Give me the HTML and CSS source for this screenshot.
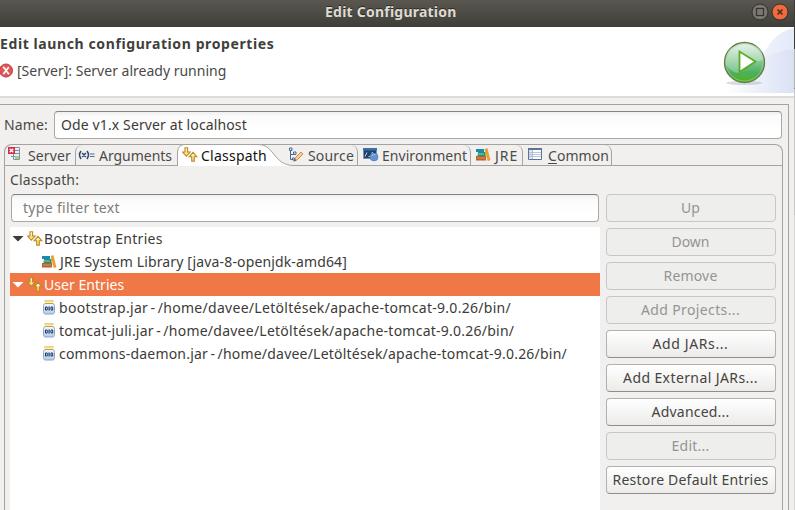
FILE: index.html
```html
<!DOCTYPE html>
<html lang="en">
<head>
<meta charset="utf-8">
<title>Edit Configuration</title>
<link rel="stylesheet" href="styles.css">
</head>
<body>
<svg class="defs" width="0" height="0">
  <defs>
    <linearGradient id="gold" x1="0" y1="0" x2="0" y2="1"><stop offset="0" stop-color="#fffbe0"/><stop offset="1" stop-color="#f8cf68"/></linearGradient>
    <linearGradient id="wave" x1="0" y1="0" x2="1" y2="0"><stop offset="0" stop-color="#fff"/><stop offset="1" stop-color="#e3e9f8"/></linearGradient>
    <linearGradient id="wave2" x1="0" y1="0" x2="1" y2="0"><stop offset="0" stop-color="#fff"/><stop offset="1" stop-color="#d7dff4"/></linearGradient>
    <linearGradient id="ball" x1="0" y1="0" x2="0" y2="1"><stop offset="0" stop-color="#e4f3e6"/><stop offset=".45" stop-color="#8ac998"/><stop offset=".75" stop-color="#4fae62"/><stop offset="1" stop-color="#4cb414"/></linearGradient>
    <linearGradient id="jarfill" x1="0" y1="0" x2="0" y2="1"><stop offset="0" stop-color="#f4f8fd"/><stop offset="1" stop-color="#b5cbe6"/></linearGradient>
    <symbol id="arrows" viewBox="0 0 16 16">
      <path d="M3 .700h2.600v4.300h2.600L4.300 9.300.500 5H3z" fill="url(#gold)" stroke="#bd8a1c" stroke-width="1.100"/>
      <path d="M9.700 14.300h2.600V9.800h2.600L11 5.400 7.200 9.800h2.500z" fill="url(#gold)" stroke="#bd8a1c" stroke-width="1.100"/>
    </symbol>
    <symbol id="books" viewBox="0 0 16 16">
      <path d="M1 2h8v3H1z" fill="#1e86b8"/><path d="M3 5h7.500v4H2.500z" fill="#19986b"/><path d="M3 6.500h6v1H3z" fill="#8fd5b5"/>
      <path d="M1 9h10v4.500H1z" fill="#b8602f"/><path d="M2 10.500h8v1H2z" fill="#de9b65"/>
      <path d="M10 2.300l2.200-.800L15 13l-2.200.500z" fill="#f4a126" stroke="#d9821a" stroke-width=".5"/>
    </symbol>
    <symbol id="jar" viewBox="0 0 16 16">
      <path d="M4 3.500C2.500 4.500 2.500 5 2.500 6.500V11.500c0 2 .8 2.500 2 2.500h7c1.200 0 2-.5 2-2.500V6.500c0-1.500 0-2-1.500-3z" fill="url(#jarfill)" stroke="#8ba4c6"/>
      <path d="M3.300 1h9.400M4 3.300h8" stroke="#d0a126" stroke-width="1.200"/><path d="M4 2.200h8" stroke="#fff1b0"/>
      <path d="M4.500 7h1.700v3H4.500zM10 7h1.700v3H10z" fill="#fff" stroke="#17386d"/><path d="M8.100 6.500v4" stroke="#17386d" stroke-width="1.200"/>
    </symbol>
  </defs>
</svg>
<div class="desktop">
<div class="window">
  <header class="titlebar">
    <span class="title">Edit Configuration</span>
    <svg class="controls" width="44" height="27" viewBox="0 0 44 27">
      <circle cx="10" cy="12" r="8" fill="#797770" stroke="#33322e"/>
      <rect x="6.500" y="8.500" width="7" height="7" fill="none" stroke="#35342f" stroke-width="1.200"/>
      <circle cx="30" cy="12" r="8" fill="#ef6a3c" stroke="#33322e"/>
      <path d="M27.500 9.500l5 5m0-5l-5 5" stroke="#47291d" stroke-width="1.500"/>
    </svg>
  </header>
  <section class="banner">
    <div class="banner-text">
      <h1>Edit launch configuration properties</h1>
      <p><svg width="14" height="16" viewBox="0 0 14 16"><circle cx="6" cy="7.500" r="6.500" fill="#e05659" stroke="#c5383f"/><path d="M3 4.200c2.500.3 3.500 6.300 6.300 6.800M8.800 4.200C7.500 5 5 9.500 3.300 11" stroke="#fff" stroke-width="1.700" fill="none"/></svg><span class="message">[Server]: Server already running</span></p>
    </div>
    <svg class="banner-art" width="74" height="69" viewBox="0 0 74 69">
      <path d="M0 66Q30 60 43 28Q54 5 74 1V66Z" fill="url(#wave)"/>
      <path d="M4 66Q34 26 74 22V66Z" fill="url(#wave2)" opacity=".8"/>
      <ellipse cx="24" cy="56" rx="18" ry="2" fill="#8d8d9c" opacity=".3"/>
      <circle cx="24.500" cy="35.500" r="20" fill="url(#ball)" stroke="#697b46" stroke-width="1.300"/>
      <circle cx="24.500" cy="35.500" r="18.500" fill="none" stroke="#8bd28d" stroke-width="1" opacity=".7"/>
      <path d="M6 38Q5 18 24 17T43 33Q31 35 24 43T6 38Z" fill="#fff" opacity=".27"/>
      <path d="M19.500 24.500v20.500L35.500 34.500Z" fill="#fff" stroke="#57ae24" stroke-width="1.800"/>
    </svg>
  </section>
  <main class="panel">
    <div class="name-row"><span class="name-label">Name:</span><div class="field name-field">Ode v1.x Server at localhost</div></div>
    <div class="folder">
      <nav class="tabs">
        <div class="tab server"><svg width="16" height="16" viewBox="0 0 16 16"><path d="M6.500 1.500h6v12h-6z" fill="#e8edf2" stroke="#8693a5"/><path d="M8 4.500h4M8 7.500h4M4 10.500h4" stroke="#7b8ea8"/><path d="M8 10h4v3H8z" fill="#a8cf74"/><path d="M1 1h7v7H1z" fill="#d32e46"/><path d="M2.700 2.700l3.600 3.600m0-3.600L2.700 6.300" stroke="#fff" stroke-width="1.300"/></svg><span>Server</span></div>
        <div class="tab arguments"><svg width="17" height="16" viewBox="0 0 17 16"><path d="M3 4q-3 3.700 0 8M9 4q3 3.700 0 8M4.200 6l3.700 4m0-4l-3.700 4" fill="none" stroke="#2e4778" stroke-width="1.500"/><path d="M12 7h4.500M12 9.500h4.500" stroke="#4f689a" stroke-width="1.100"/></svg><span>Arguments</span></div>
        <div class="tab classpath"><svg class="shape" width="118" height="22" viewBox="0 0 118 22"><path d="M.5 22V8Q1 .5 8 .5H81C98 .5 96 21.500 117 21.500V22Z" fill="#fff"/><path d="M.5 22V8Q1 .5 8 .5H81C98 .5 96 21.500 117 21.500" fill="none" stroke="#a5a3a0"/></svg><svg class="icon" width="16" height="16"><use href="#arrows"/></svg><span>Classpath</span></div>
        <div class="tab source"><svg width="16" height="16" viewBox="0 0 16 16"><path d="M2.500 3v9.500H5M2.500 7.500H6" fill="none" stroke="#496894"/><path d="M1.500 1h2.500v2.500H1.500zM5.500 5h2.500v2.500H5.500zM4.500 11h2v2h-2z" fill="#d9e5f4" stroke="#496894"/><path d="M6.500 14l1-3.500L13 5l2 2-5.500 5.500z" fill="#f8cf92" stroke="#c58243" stroke-width=".9"/><path d="M5.500 14.700l1.300-3 1.700 1.700z" fill="#665"/></svg><span>Source</span></div>
        <div class="tab environment"><svg width="16" height="16" viewBox="0 0 16 16"><path d="M.500 1.500h13v10H.500z" fill="#243f68" stroke="#7794b8"/><path d="M0 1h14v2.500H0z" fill="#3472ad"/><path d="M2 9.500l2-4M5.500 9.500h2L9.500 5" fill="none" stroke="#cad9e9"/><circle cx="11" cy="10" r="4" fill="#6495cd" stroke="#477bb4" stroke-width=".6"/><path d="M8.500 9q2-3 4-1" fill="none" stroke="#a6c9ed"/></svg><span>Environment</span></div>
        <div class="tab jre"><svg width="16" height="16"><use href="#books"/></svg><span>JRE</span></div>
        <div class="tab common"><svg width="16" height="16" viewBox="0 0 16 16"><path d="M.500 1.500h13v11H.500z" fill="#fff" stroke="#5d719b"/><path d="M0 1h14v2H0z" fill="#5d719b"/><path d="M1 3h3.500v9H1z" fill="#dbe5f3"/><path d="M4.500 3v9M1 5.500h12M1 7.500h12M1 9.500h12" stroke="#a9b6cf" stroke-width=".8"/></svg><span><u>C</u>ommon</span></div>
      </nav>
      <div class="page">
        <div class="list-side">
          <div class="cp-label">Classpath:</div>
          <div class="field filter">type filter text</div>
          <div class="tree">
            <div class="row"><i class="arrow"></i><svg width="16" height="16"><use href="#arrows"/></svg><span class="t-boot">Bootstrap Entries</span></div>
            <div class="row child"><svg width="16" height="16"><use href="#books"/></svg><span class="t-jre">JRE System Library [java-8-openjdk-amd64]</span></div>
            <div class="row selected"><i class="arrow"></i><svg width="16" height="16"><use href="#arrows"/></svg><span class="t-user">User Entries</span></div>
            <div class="row child"><svg width="16" height="16"><use href="#jar"/></svg><span class="t-bjar">bootstrap.jar - /home/davee/Letöltések/apache-tomcat-9.0.26/bin/</span></div>
            <div class="row child"><svg width="16" height="16"><use href="#jar"/></svg><span class="t-juli">tomcat-juli.jar - /home/davee/Letöltések/apache-tomcat-9.0.26/bin/</span></div>
            <div class="row child"><svg width="16" height="16"><use href="#jar"/></svg><span class="t-daemon">commons-daemon.jar - /home/davee/Letöltések/apache-tomcat-9.0.26/bin/</span></div>
          </div>
        </div>
        <div class="buttons">
          <button class="up" disabled>Up</button>
          <button class="down" disabled>Down</button>
          <button class="remove" disabled>Remove</button>
          <button class="projects" disabled>Add Projects...</button>
          <button class="jars">Add JARs...</button>
          <button class="external">Add External JARs...</button>
          <button class="advanced">Advanced...</button>
          <button class="edit" disabled>Edit...</button>
          <button class="restore">Restore Default Entries</button>
        </div>
      </div>
    </div>
  </main>
</div>
<div class="behind"></div>
</div>
</body>
</html>
```
FILE: styles.css
```css
* { box-sizing: border-box; }
body { margin: 0; overflow: hidden; background: #f1f0ee; color: #4a4946; font: 14px/20px "Noto Sans", "Open Sans", sans-serif; white-space: nowrap; }
.defs { display: block; position: absolute; }
svg { display: block; flex: none; }
.desktop { display: flex; width: 795px; height: 510px; overflow: hidden; }
.window { width: 794px; height: 510px; }
.behind { width: 1px; background: linear-gradient(#3c3b37 49px, #b5b4b2 49px, #b5b4b2 88px, #8d8c8a 88px, #8d8c8a 89px, #c9c8c6 89px, #c9c8c6 215px, #d5d4d2 215px); }

.titlebar { display: flex; height: 27px; padding-left: 325px; justify-content: space-between; background: linear-gradient(#59574f, #3f3e39); color: #dfdbd2; font-weight: 700; line-height: 24px; letter-spacing: .23px; text-shadow: 0 -1px #2b2a27; }

.banner { display: flex; justify-content: space-between; height: 71px; background: #fff; border-bottom: 2px solid #dddcda; }
h1 { margin: 7px 0 0; font-size: 14px; line-height: 20px; letter-spacing: .6px; color: #403f3c; }
.banner-text p { display: flex; align-items: center; height: 20px; margin: 7px 0 0; gap: 3px; }

.panel { width: 789px; height: 406px; margin-top: 6px; padding: 6px 5px 0 4px; border: solid #a5a3a0; border-width: 1px 1px 0 0; }
.name-row { display: flex; height: 28px; margin-bottom: 5px; line-height: 27px; }
.name-label { width: 50px; letter-spacing: .15px; }
.field { border: 1px solid #aaa8a5; border-top-color: #858381; border-radius: 4px; background: linear-gradient(#efefef, #fafafa 4px, #fff 75%); }
.name-field { width: 728px; padding-left: 6px; line-height: 26px; letter-spacing: .12px; color: #3c3b37; }

.folder { width: 779px; height: 366px; border: 1px solid #a5a3a0; border-bottom: 0; border-radius: 8px 8px 0 0; }
.tabs { display: flex; height: 21px; border-bottom: 1px solid #a5a3a0; }
.tab { position: relative; display: flex; height: 20px; line-height: 21px; color: #4c4b48; }
.tab > svg { margin-top: 2px; }
.server { width: 70px; padding-left: 2px; gap: 5px; letter-spacing: .14px; }
.server > svg { margin-top: 1px; }
.arguments { width: 102px; padding-left: 2px; gap: 4px; border-left: 1px solid #a5a3a0; border-top-left-radius: 7px; letter-spacing: -.03px; }
.classpath { width: 105px; padding-left: 5px; gap: 3px; color: #111; letter-spacing: .23px; }
.classpath .shape { position: absolute; top: -1px; left: 0; margin: 0; }
.classpath .icon, .classpath span { position: relative; }
.source { width: 76px; padding-left: 6px; gap: 4px; letter-spacing: .18px; }
.environment { width: 113px; padding-left: 5px; gap: 3px; letter-spacing: .05px; }
.jre { width: 52px; padding-left: 4px; gap: 4px; letter-spacing: 1px; }
.common { width: 89px; padding-left: 5px; gap: 4px; letter-spacing: .06px; }
.source, .environment, .jre, .common { border-right: 1px solid #a5a3a0; border-top-right-radius: 7px; }
u { text-underline-offset: 2px; }

.page { display: flex; gap: 6px; padding-left: 5px; height: 344px; }
.list-side { width: 590px; }
.cp-label { height: 28px; line-height: 28px; letter-spacing: .14px; }
.filter { height: 28px; width: 588px; margin-left: 1px; padding-left: 11px; line-height: 26px; letter-spacing: .31px; color: #7d7b78; }
.tree { height: 283px; margin-top: 5px; background: #fff; color: #3c3b37; }
.row { display: flex; align-items: center; height: 23px; line-height: 23px; padding-left: 2px; }
.row svg { margin-right: 1px; }
.arrow { width: 12px; height: 6px; margin-right: 3px; background: currentColor; clip-path: polygon(0 0, 100% 0, 50% 100%); }
.child { padding-left: 31px; }
.child svg { margin-right: 2px; }
.selected { background: #f07746; color: #fff; }
.t-boot { letter-spacing: .28px; }
.t-jre { padding-left: 1px; letter-spacing: .14px; }
.t-user { letter-spacing: .04px; }
.t-bjar, .t-juli, .t-daemon { word-spacing: -1.5px; }
.t-bjar { letter-spacing: .29px; }
.t-juli { letter-spacing: .24px; }
.t-daemon { letter-spacing: .21px; }

.buttons { display: flex; flex-direction: column; gap: 6px; padding-top: 28px; width: 170px; }
button { height: 28px; padding: 0 1px 0 0; border: 1px solid #b3b1ae; border-bottom-color: #8f8d8a; border-radius: 4px; background: linear-gradient(#fff, #ecebea); color: #45443f; font: inherit; line-height: 26px; }
button:disabled { border-color: #c9c7c4; background: #eeeeec; color: #969491; }
.remove { letter-spacing: .18px; }
.projects { letter-spacing: .37px; }
.jars { letter-spacing: .61px; }
.external { letter-spacing: .4px; }
.advanced, .edit, .restore { letter-spacing: .21px; }
```
